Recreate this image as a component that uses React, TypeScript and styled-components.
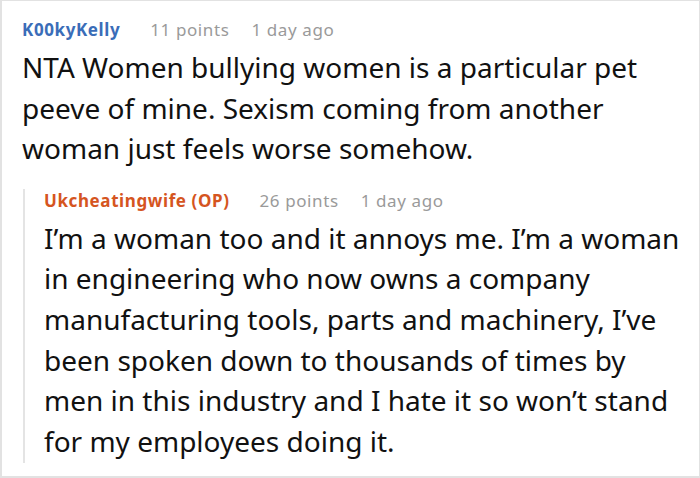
import React from "react";
import styled, { createGlobalStyle } from "styled-components";

const GlobalStyle = createGlobalStyle`
  html, body {
    margin: 0;
    padding: 0;
    background: #fff;
  }
  body {
    font-family: "Noto Sans", "Open Sans", sans-serif;
  }
`;

const Page = styled.div`
  box-sizing: border-box;
  width: 700px;
  height: 478px;
  border: 1px solid #e2e2e2;
  border-left-width: 2px;
  border-bottom-width: 2px;
  padding: 17px 0 0 20px;
  overflow: hidden;
`;

const Comment = styled.div`
  display: flex;
  flex-direction: column;
`;

const Meta = styled.div`
  display: flex;
  align-items: baseline;
  font-size: 17px;
  line-height: 24px;
  letter-spacing: 0.6px;
  color: #9a9a9a;
`;

const Author = styled.span<{ $op?: boolean }>`
  font-weight: 700;
  color: ${({ $op }) => ($op ? "#d5551f" : "#3a6db8")};
  margin-right: 30px;
`;

const Points = styled.span`
  margin-right: 22px;
`;

const Body = styled.div`
  margin-top: 5px;
  font-size: 28px;
  line-height: 40.6px;
  color: #111;
`;

const Line = styled.span`
  display: block;
  white-space: nowrap;
`;

const Reply = styled.div`
  margin-top: 20px;
  margin-left: 1px;
  border-left: 2px solid #e4e4e4;
  padding: 0 0 2px 19px;
`;

const first = [
  "NTA Women bullying women is a particular pet",
  "peeve of mine. Sexism coming from another",
  "woman just feels worse somehow.",
];

const reply = [
  "I’m a woman too and it annoys me. I’m a woman",
  "in engineering who now owns a company",
  "manufacturing tools, parts and machinery, I’ve",
  "been spoken down to thousands of times by",
  "men in this industry and I hate it so won’t stand",
  "for my employees doing it.",
];

export default function App() {
  return (
    <>
      <GlobalStyle />
      <Page>
        <Comment>
          <Meta>
            <Author>K00kyKelly</Author>
            <Points>11 points</Points>
            <span>1 day ago</span>
          </Meta>
          <Body>
            {first.map((l) => (
              <Line key={l}>{l}</Line>
            ))}
          </Body>
          <Reply>
            <Meta>
              <Author $op>Ukcheatingwife (OP)</Author>
              <Points>26 points</Points>
              <span>1 day ago</span>
            </Meta>
            <Body>
              {reply.map((l) => (
                <Line key={l}>{l}</Line>
              ))}
            </Body>
          </Reply>
        </Comment>
      </Page>
    </>
  );
}
